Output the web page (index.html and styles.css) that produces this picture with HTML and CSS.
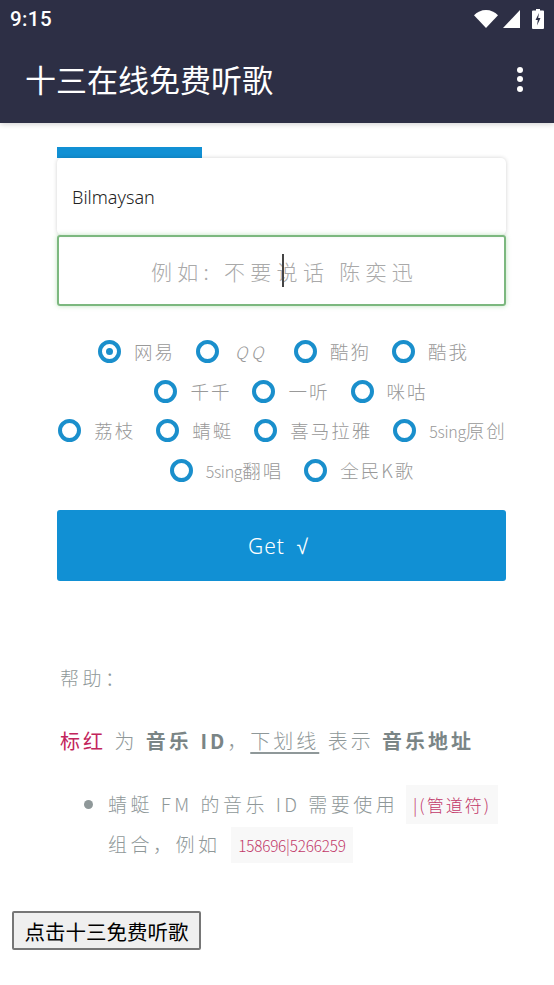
FILE: index.html
```html
<!DOCTYPE html>
<html lang="zh-CN">
<head>
<meta charset="utf-8">
<title>十三在线免费听歌</title>
<link rel="stylesheet" href="styles.css">
</head>
<body>
<header class="appbar">
  <div class="status">
    <span class="time">9:15</span>
    <span class="status-icons">
      <svg class="i-wifi" viewBox="0 0 24 18" width="24" height="18"><path d="M0 5.200C3.200 2 7.400 0 12 0s8.800 2 12 5.200L12 18z" fill="#fff"/></svg>
      <svg class="i-signal" viewBox="0 0 17 18" width="17" height="18"><path d="M17 0v18H0z" fill="#fff"/></svg>
      <svg class="i-batt" viewBox="0 0 12 20" width="12" height="20"><path fill-rule="evenodd" fill="#fff" d="M4 0h4v1.500h3a1 1 0 0 1 1 1V19a1 1 0 0 1-1 1H1a1 1 0 0 1-1-1V2.500a1 1 0 0 1 1-1h3zM7 4 3.500 11h2.300l-.8 5.500L8.500 9H6.200z"/></svg>
    </span>
  </div>
  <div class="toolbar">
    <h1 class="title">十三在线免费听歌</h1>
    <span class="menu"><i></i><i></i><i></i></span>
  </div>
</header>

<main class="content">
  <div class="tab"></div>
  <div class="card">Bilmaysan</div>
  <div class="search"><span class="ph">例如: 不要说话 陈奕迅</span><span class="caret"></span></div>

  <div class="radios">
    <div class="radio-row row-a">
      <label class="radio on"><b></b><span>网易</span></label>
      <label class="radio"><b></b><span class="qq">Q Q</span></label>
      <label class="radio"><b></b><span>酷狗</span></label>
      <label class="radio"><b></b><span>酷我</span></label>
    </div>
    <div class="radio-row row-b">
      <label class="radio"><b></b><span>千千</span></label>
      <label class="radio"><b></b><span>一听</span></label>
      <label class="radio"><b></b><span>咪咕</span></label>
    </div>
    <div class="radio-row row-c">
      <label class="radio"><b></b><span>荔枝</span></label>
      <label class="radio"><b></b><span>蜻蜓</span></label>
      <label class="radio"><b></b><span>喜马拉雅</span></label>
      <label class="radio"><b></b><span><em class="latin">5sing</em>原创</span></label>
    </div>
    <div class="radio-row row-d">
      <label class="radio"><b></b><span><em class="latin">5sing</em>翻唱</span></label>
      <label class="radio"><b></b><span>全民K歌</span></label>
    </div>
  </div>

  <div class="get">Get √</div>

  <section class="help">
    <p class="help-head">帮助：</p>
    <p class="help-line"><span class="red">标红</span> 为 <strong>音乐 ID</strong>，<u>下划线</u> 表示 <strong>音乐地址</strong></p>
    <ul class="help-list">
      <li>蜻蜓 FM 的音乐 ID 需要使用 <code class="pipe">|(管道符)</code> 组合，例如 <code class="num">158696|5266259</code></li>
    </ul>
  </section>
</main>

<button class="free" type="button">点击十三免费听歌</button>
</body>
</html>
```
FILE: styles.css
```css
* { box-sizing: border-box; }
html, body { margin: 0; padding: 0; }
body {
  width: 554px;
  height: 985px;
  overflow: hidden;
  background: #fff;
  font-family: "Noto Sans CJK SC", "Noto Sans", sans-serif;
}
.appbar {
  height: 123px;
  background: #2d2f45;
  color: #fff;
  box-shadow: 0 1px 6px rgba(0, 0, 0, .2);
}
.status {
  height: 37px;
  display: flex;
  align-items: center;
  justify-content: space-between;
  padding: 1px 10px 0 10px;
}
.time { font: 500 20.500px/1 Roboto, sans-serif; letter-spacing: .4px; }
.status-icons { display: flex; align-items: center; gap: 5px; }
.i-batt { margin-left: 7px; margin-top: -1px; }
.toolbar {
  height: 86px;
  padding: 0 31px 2px 25px;
  display: flex;
  align-items: center;
  justify-content: space-between;
}
.title { margin: 0; font-size: 31px; font-weight: 400; line-height: 1.2; color: #fff; }
.menu { display: flex; flex-direction: column; gap: 3.500px; }
.menu i { display: block; width: 6px; height: 6px; border-radius: 50%; background: #fff; }

.content { padding: 24px 48px 0 57px; }
.tab { width: 145px; height: 11px; background: #1190d4; }
.card {
  height: 77px;
  padding: 0 15px;
  display: flex;
  align-items: center;
  background: #fff;
  border-radius: 5px;
  box-shadow: 0 0 4px rgba(0, 0, 0, .18);
  font: 300 18px "Noto Sans", sans-serif;
  color: #222;
}
.search {
  position: relative;
  height: 71px;
  padding-left: 6px;
  border: 2px solid #7cb87f;
  border-radius: 3px;
  box-shadow: 0 0 5px rgba(92, 184, 92, .4);
  display: flex;
  align-items: center;
  justify-content: center;
  font-size: 21px;
  font-weight: 300;
  letter-spacing: 5.300px;
  color: #a9a9a9;
}
.caret { position: absolute; left: 223px; top: 17px; width: 1.500px; height: 33px; background: #444; }

.radios {
  margin: 34px -8px 0 -8px;
  display: flex;
  flex-direction: column;
  gap: 16.700px;
}
.radio-row { display: flex; justify-content: center; gap: 21px; height: 23px; }
.row-a { padding-left: 4px; }
.row-b { padding-left: 19px; }
.row-c { padding-left: 2px; }
.row-d { padding-left: 22px; }
.radio { display: flex; align-items: center; gap: 13px; font-size: 18.500px; line-height: 23px; font-weight: 300; letter-spacing: 2px; color: #999; white-space: nowrap; }
.radio b {
  width: 23px;
  height: 23px;
  border: 4px solid #1a8fcc;
  border-radius: 50%;
  display: flex;
  align-items: center;
  justify-content: center;
  flex: none;
}
.radio.on b::after { content: ""; width: 7px; height: 7px; border-radius: 50%; background: #1a8fcc; }
.qq { width: 41px; padding-left: 3px; font-size: 17px; letter-spacing: 0; font-style: italic; }
.latin { font-style: normal; font-size: 16px; letter-spacing: -.3px; }

.get {
  margin-top: 28px;
  height: 71px;
  padding-right: 6px;
  background: #1190d4;
  border-radius: 3px;
  color: #fff;
  display: flex;
  align-items: center;
  justify-content: center;
  font: 300 21px "Noto Sans", sans-serif;
  word-spacing: 5px;
  letter-spacing: 1px;
}

.help { color: #8f9899; font-size: 19px; font-weight: 300; margin: 0 -8px 0 3px; letter-spacing: 3.500px; }
.help p { margin: 0; }
.help .help-head { margin-top: 81px; line-height: 32px; }
.help .help-line { margin-top: 31px; line-height: 32px; white-space: nowrap; font-size: 20px; letter-spacing: 3px; word-spacing: 1px; }
.red { color: #c2255c; font-weight: 400; }
strong { font-weight: 700; color: #7a8586; }
u { text-underline-offset: 3px; }
.help-list { margin: 27px 0 0; padding: 0 0 0 48px; list-style: none; }
.help-list li { position: relative; line-height: 40px; }
.help-list li::before {
  content: "";
  position: absolute;
  left: -24px;
  top: 16px;
  width: 9px;
  height: 9px;
  border-radius: 50%;
  background: #8f9899;
}
code {
  font-family: inherit;
  line-height: 1;
  color: #c2386a;
  background: #f8f8f8;
  padding: 7px;
  font-weight: 300;
}
.pipe { font-size: 17px; letter-spacing: 2px; }
.num { font-size: 15.300px; letter-spacing: -.2px; margin-left: 3px; }

.free {
  display: block;
  margin: 47px 0 0 12px;
  width: 189px;
  height: 39px;
  padding: 0;
  background: #efefef;
  border: 2px solid #767676;
  border-radius: 2px;
  font-family: "Noto Sans CJK SC", sans-serif;
  font-size: 20.500px;
  color: #000;
}
```
